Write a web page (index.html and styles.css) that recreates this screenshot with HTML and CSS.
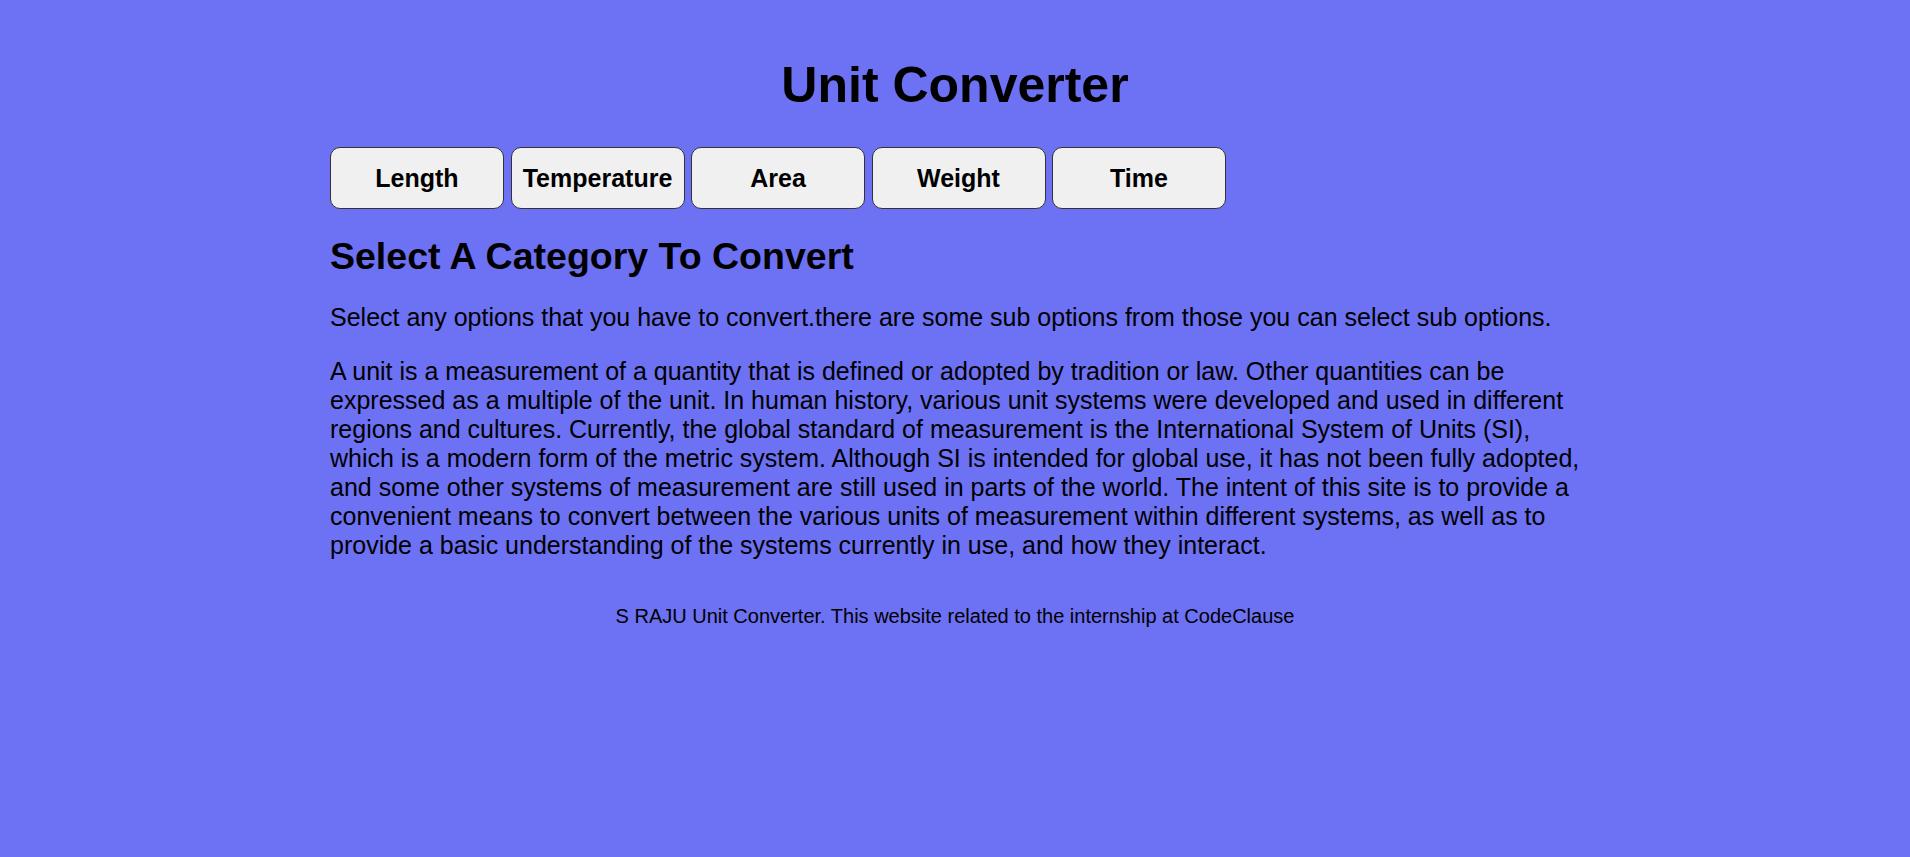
FILE: index.html
```html
<!DOCTYPE html>
<html lang="en">
<head>
<meta charset="utf-8">
<title>Unit Converter</title>
<link rel="stylesheet" href="styles.css">
</head>
<body>
<div class="page">
  <h1 class="title">Unit Converter</h1>
  <div class="tabs">
    <button class="tab">Length</button>
    <button class="tab">Temperature</button>
    <button class="tab">Area</button>
    <button class="tab">Weight</button>
    <button class="tab">Time</button>
  </div>
  <h2 class="heading">Select A Category To Convert</h2>
  <p class="text">Select any options that you have to convert.there are some sub options from those you can select sub options.</p>
  <p class="text">A unit is a measurement of a quantity that is defined or adopted by tradition or law. Other quantities can be expressed as a multiple of the unit. In human history, various unit systems were developed and used in different regions and cultures. Currently, the global standard of measurement is the International System of Units (SI), which is a modern form of the metric system. Although SI is intended for global use, it has not been fully adopted, and some other systems of measurement are still used in parts of the world. The intent of this site is to provide a convenient means to convert between the various units of measurement within different systems, as well as to provide a basic understanding of the systems currently in use, and how they interact.</p>
  <p class="footer">S RAJU Unit Converter. This website related to the internship at CodeClause</p>
</div>
</body>
</html>
```
FILE: styles.css
```css
html, body {
  margin: 0;
  padding: 0;
}
body {
  background: #6d71f3;
  color: #000;
  font-family: "Liberation Sans", Arial, sans-serif;
  font-size: 25px;
  min-height: 857px;
}
.page {
  width: 1250px;
  margin: 0 auto;
  padding-top: 56px;
}
.title {
  margin: 0;
  font-size: 50px;
  font-weight: bold;
  text-align: center;
}
.tabs {
  display: flex;
  gap: 6.5px;
  margin-top: 33px;
}
.tab {
  box-sizing: border-box;
  width: 174px;
  height: 62px;
  background: #f0f0f0;
  border: 1px solid #333;
  border-radius: 10px;
  font-family: "Liberation Sans", Arial, sans-serif;
  font-size: 25px;
  font-weight: bold;
  color: #000;
  padding: 0;
}
.heading {
  margin: 26px 0 0;
  font-size: 37.5px;
  font-weight: bold;
}
.text {
  margin: 25px 0 0;
  font-size: 25px;
}
.footer {
  margin: 45px 0 0;
  font-size: 20px;
  text-align: center;
}
```
